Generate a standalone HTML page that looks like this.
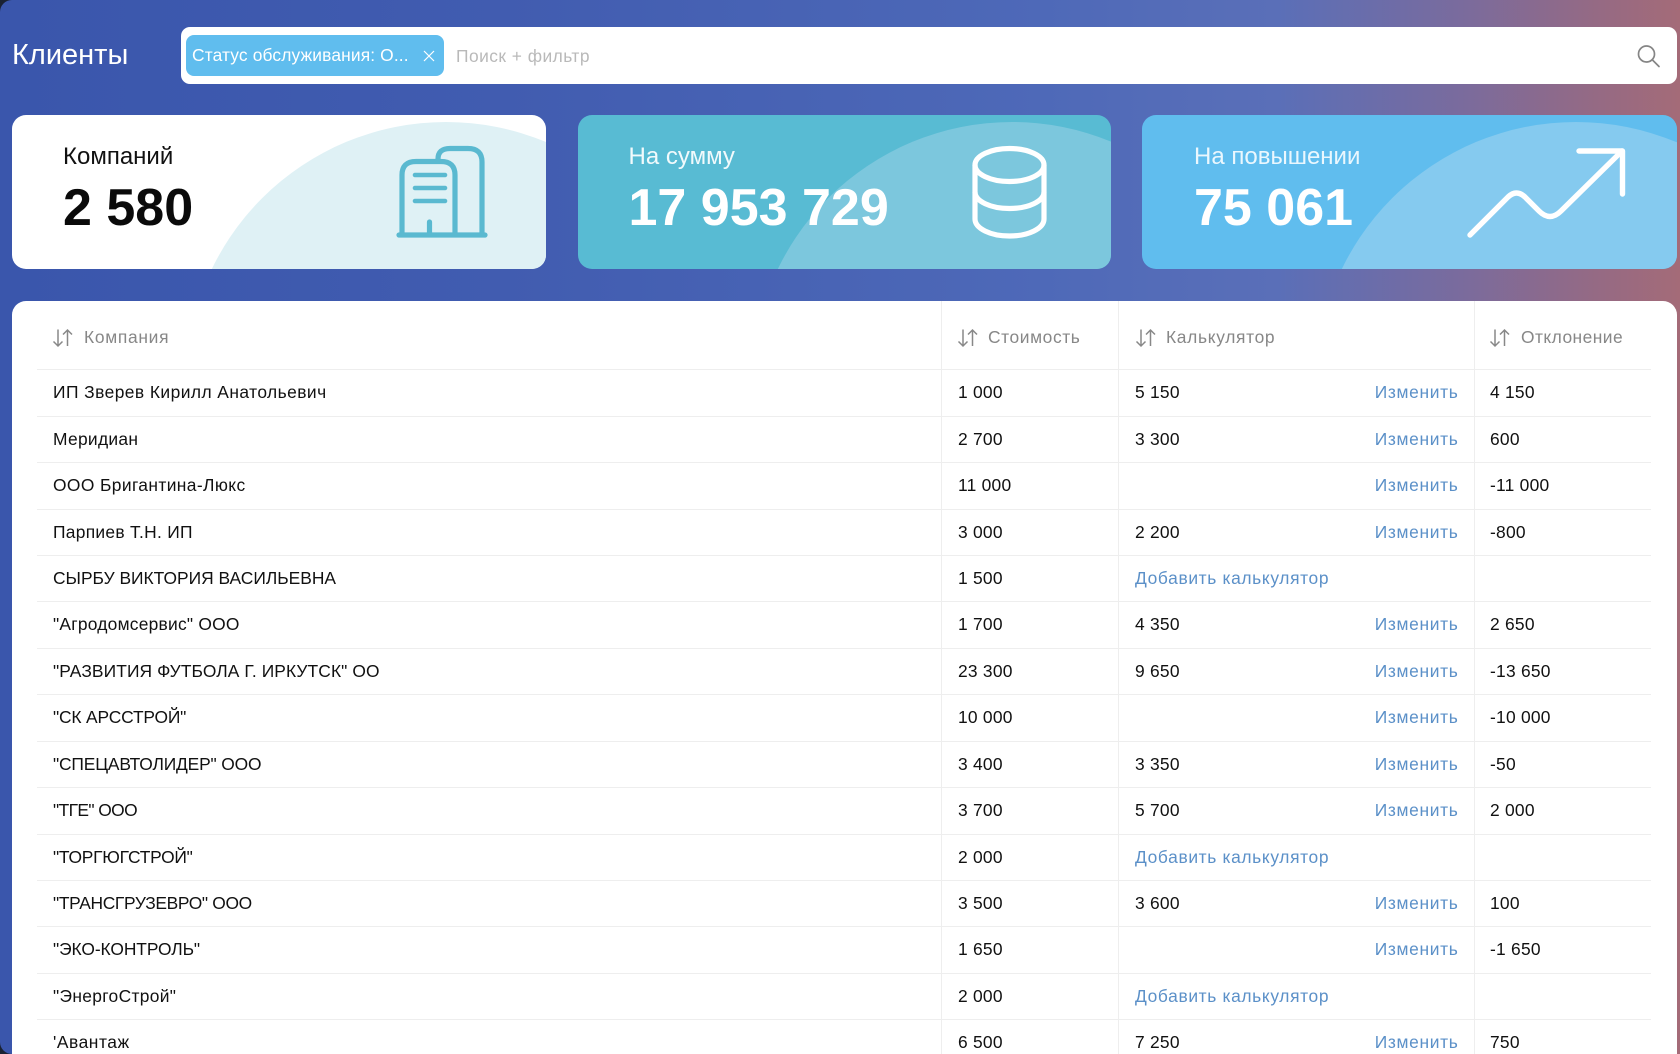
<!DOCTYPE html>
<html lang="ru"><head><meta charset="utf-8"><title>Клиенты</title>
<style>
*{box-sizing:border-box;margin:0;padding:0}
html,body{width:1680px;height:1054px;overflow:hidden;background:#1a2233}
body{font-family:"Liberation Sans","Noto Sans CJK SC",sans-serif;position:relative}
#bg{position:absolute;inset:0;border-radius:12px 0 0 12px;overflow:hidden;background:linear-gradient(90deg,#3a56ac 0%,#415cb0 30%,#4e69b8 62%,#5a6fb8 76%,#7a6b9d 87%,#956a84 95%,#a46b78 100%)}
.a{position:absolute;white-space:nowrap}
h1{position:absolute;left:12px;top:37px;font-size:29px;font-weight:400;color:#fff;line-height:36px}
#search{position:absolute;left:181px;top:27px;width:1496px;height:57px;background:#fff;border-radius:9px}
#chip{position:absolute;left:186px;top:35px;width:258px;height:41px;background:#60bdee;border-radius:8px;color:#fff;font-size:17.4px;letter-spacing:.13px;line-height:41px;padding-left:6px}
.card{position:absolute;top:115px;height:154px;border-radius:14px;overflow:hidden}
.card i{position:absolute;left:174px;top:7px;width:520px;height:520px;border-radius:50%}
.card .l{position:absolute;left:51px;top:27px;font-size:24px;line-height:30px;white-space:nowrap}
.card .n{position:absolute;left:51px;top:65px;font-size:52px;font-weight:700;line-height:56px;white-space:nowrap}
.card svg{position:absolute;left:0;top:0}
#tbl{position:absolute;left:12px;top:300.500px;width:1665px;height:760px;background:#fff;border-radius:14px 14px 0 0}
.v{position:absolute;top:301px;bottom:0;width:1px;background:#eeeeee}
.h{position:absolute;top:325px;height:24px;line-height:24px;font-size:17.4px;color:#878787;white-space:nowrap}
.r{position:absolute;left:37px;width:1614px;height:46.43px;border-top:1px solid #eeeeee;font-size:17.4px;line-height:45px;color:#111}
.r span{position:absolute;top:0;white-space:nowrap}
.c1{left:16px}.c2{left:921px;letter-spacing:.25px}.c3{left:1098px;letter-spacing:.25px}.c4{left:1453px;letter-spacing:.25px}
.r .e{right:192.500px;color:#5b90c8;letter-spacing:.67px}
.r .ad{left:1098px;color:#5b90c8;letter-spacing:.64px}
</style></head><body>
<div id="bg">
<h1>Клиенты</h1>
<div id="search"></div>
<div id="chip">Статус обслуживания: О...</div>
<svg class="a" style="left:420px;top:47px" width="18" height="18" viewBox="0 0 18 18"><path d="M4 4L14 14M14 4L4 14" stroke="#fff" stroke-width="1.2" fill="none"/></svg>
<div class="a" style="left:456px;top:43px;font-size:17.4px;letter-spacing:.46px;line-height:26px;color:#b9b9b9">Поиск + фильтр</div>
<svg class="a" style="left:1634px;top:42px" width="30" height="28" viewBox="0 0 30 28" fill="none" stroke="#858585" stroke-width="1.7"><circle cx="12.5" cy="12" r="8"/><path d="M18.500 18L25 24.500" stroke-linecap="round"/></svg>

<div class="card" style="left:12px;width:534px;background:#fff">
<i style="background:#dff1f5"></i>
<div class="l" style="color:#111">Компаний</div><div class="n" style="color:#0a0a0a">2 580</div>
<svg width="534" height="154" fill="none" stroke="#5ab9d0" stroke-width="5.200" stroke-linecap="round" stroke-linejoin="round">
<path d="M387 120H473"/>
<path d="M390 119V60Q390 46.500 404 46.500H429Q443 46.500 443 60V119"/>
<path d="M426 45V44Q426 33.500 438 33.500H456Q470 33.500 470 47V119"/>
<path d="M403 60H433M403 73H433M403 86H433" stroke-width="4.600"/>
<path d="M417.500 107V119"/>
</svg>
</div>

<div class="card" style="left:577.500px;width:533.500px;background:#58bbd3">
<i style="background:#7cc7dd"></i>
<div class="l" style="color:#f1fafc">На сумму</div><div class="n" style="color:#fff">17 953 729</div>
<svg width="534" height="154" fill="none" stroke="#fff" stroke-width="5.200">
<ellipse cx="431.500" cy="50" rx="34.500" ry="16.500"/>
<path d="M397 50V104A34.500 17 0 0 0 466 104V50"/>
<path d="M397 77A34.500 16.500 0 0 0 466 77"/>
</svg>
</div>

<div class="card" style="left:1142px;width:535px;background:#60bdee">
<i style="background:#85caef"></i>
<div class="l" style="left:52px;color:#eaf7fe">На повышении</div><div class="n" style="left:52px;color:#fff">75 061</div>
<svg width="535" height="154" fill="none" stroke="#fff" stroke-width="5.400" stroke-linecap="round" stroke-linejoin="round">
<path d="M328 120L366 82Q374.500 74 383 82L397 96Q408 107 419 96L480 36"/>
<path d="M437 36H480.500V79"/>
</svg>
</div>

<div id="tbl"></div>
<div class="v" style="left:941px"></div><div class="v" style="left:1118px"></div><div class="v" style="left:1474px"></div>

<svg class="a" style="left:52px;top:328px" width="22" height="20" viewBox="0 0 22 20" fill="none" stroke="#888" stroke-width="1.5"><path d="M6 1.500V18M1.500 13.500L6 18L10.500 13.500M15.500 18V2M11 6.500L15.500 2L20 6.500"/></svg>
<div class="h" style="left:84px;letter-spacing:.7px">Компания</div>
<svg class="a" style="left:957px;top:328px" width="22" height="20" viewBox="0 0 22 20" fill="none" stroke="#888" stroke-width="1.5"><path d="M6 1.500V18M1.500 13.500L6 18L10.500 13.500M15.500 18V2M11 6.500L15.500 2L20 6.500"/></svg>
<div class="h" style="left:988px;letter-spacing:.6px">Стоимость</div>
<svg class="a" style="left:1134.500px;top:328px" width="22" height="20" viewBox="0 0 22 20" fill="none" stroke="#888" stroke-width="1.5"><path d="M6 1.500V18M1.500 13.500L6 18L10.500 13.500M15.500 18V2M11 6.500L15.500 2L20 6.500"/></svg>
<div class="h" style="left:1166px;letter-spacing:.68px">Калькулятор</div>
<svg class="a" style="left:1489px;top:328px" width="22" height="20" viewBox="0 0 22 20" fill="none" stroke="#888" stroke-width="1.5"><path d="M6 1.500V18M1.500 13.500L6 18L10.500 13.500M15.500 18V2M11 6.500L15.500 2L20 6.500"/></svg>
<div class="h" style="left:1521px;letter-spacing:.45px">Отклонение</div>

<div class="r" style="top:369.300px"><span class="c1" style="letter-spacing:.44px">ИП Зверев Кирилл Анатольевич</span><span class="c2">1 000</span><span class="c3">5 150</span><span class="e">Изменить</span><span class="c4">4 150</span></div>
<div class="r" style="top:415.730px"><span class="c1" style="letter-spacing:.3px">Меридиан</span><span class="c2">2 700</span><span class="c3">3 300</span><span class="e">Изменить</span><span class="c4">600</span></div>
<div class="r" style="top:462.160px"><span class="c1" style="letter-spacing:.39px">ООО Бригантина-Люкс</span><span class="c2">11 000</span><span class="e">Изменить</span><span class="c4">-11 000</span></div>
<div class="r" style="top:508.590px"><span class="c1" style="letter-spacing:.29px">Парпиев Т.Н. ИП</span><span class="c2">3 000</span><span class="c3">2 200</span><span class="e">Изменить</span><span class="c4">-800</span></div>
<div class="r" style="top:555.020px"><span class="c1">СЫРБУ ВИКТОРИЯ ВАСИЛЬЕВНА</span><span class="c2">1 500</span><span class="ad">Добавить калькулятор</span></div>
<div class="r" style="top:601.450px"><span class="c1" style="letter-spacing:.24px">"Агродомсервис" ООО</span><span class="c2">1 700</span><span class="c3">4 350</span><span class="e">Изменить</span><span class="c4">2 650</span></div>
<div class="r" style="top:647.880px"><span class="c1" style="letter-spacing:.1px">"РАЗВИТИЯ ФУТБОЛА Г. ИРКУТСК" ОО</span><span class="c2">23 300</span><span class="c3">9 650</span><span class="e">Изменить</span><span class="c4">-13 650</span></div>
<div class="r" style="top:694.310px"><span class="c1" style="letter-spacing:-.16px">"СК АРССТРОЙ"</span><span class="c2">10 000</span><span class="e">Изменить</span><span class="c4">-10 000</span></div>
<div class="r" style="top:740.740px"><span class="c1" style="letter-spacing:-.16px">"СПЕЦАВТОЛИДЕР" ООО</span><span class="c2">3 400</span><span class="c3">3 350</span><span class="e">Изменить</span><span class="c4">-50</span></div>
<div class="r" style="top:787.170px"><span class="c1" style="letter-spacing:-.6px">"ТГЕ" ООО</span><span class="c2">3 700</span><span class="c3">5 700</span><span class="e">Изменить</span><span class="c4">2 000</span></div>
<div class="r" style="top:833.600px"><span class="c1" style="letter-spacing:-.25px">"ТОРГЮГСТРОЙ"</span><span class="c2">2 000</span><span class="ad">Добавить калькулятор</span></div>
<div class="r" style="top:880.030px"><span class="c1" style="letter-spacing:-.34px">"ТРАНСГРУЗЕВРО" ООО</span><span class="c2">3 500</span><span class="c3">3 600</span><span class="e">Изменить</span><span class="c4">100</span></div>
<div class="r" style="top:926.460px"><span class="c1" style="letter-spacing:-.08px">"ЭКО-КОНТРОЛЬ"</span><span class="c2">1 650</span><span class="e">Изменить</span><span class="c4">-1 650</span></div>
<div class="r" style="top:972.890px"><span class="c1" style="letter-spacing:.33px">"ЭнергоСтрой"</span><span class="c2">2 000</span><span class="ad">Добавить калькулятор</span></div>
<div class="r" style="top:1019.320px"><span class="c1" style="letter-spacing:.54px">'Авантаж</span><span class="c2">6 500</span><span class="c3">7 250</span><span class="e">Изменить</span><span class="c4">750</span></div>
</div>
</body></html>
